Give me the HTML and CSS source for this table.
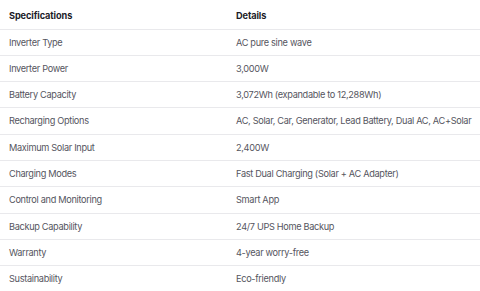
FILE: index.html
```html
<!DOCTYPE html>
<html lang="en">

<head>
    <meta charset="UTF-8">
    <meta name="viewport" content="width=device-width, initial-scale=1.0">
    <title>Specifications</title>
    <link rel="stylesheet" href="styles.css">
</head>

<body>
    <table class="spec-table">
        <thead>
            <tr>
                <th>Specifications</th>
                <th>Details</th>
            </tr>
        </thead>
        <tbody>
            <tr>
                <td>Inverter Type</td>
                <td>AC pure sine wave</td>
            </tr>
            <tr>
                <td>Inverter Power</td>
                <td>3,000W</td>
            </tr>
            <tr>
                <td>Battery Capacity</td>
                <td>3,072Wh (expandable to 12,288Wh)</td>
            </tr>
            <tr>
                <td>Recharging Options</td>
                <td>AC, Solar, Car, Generator, Lead Battery, Dual AC, AC+Solar</td>
            </tr>
            <tr>
                <td>Maximum Solar Input</td>
                <td>2,400W</td>
            </tr>
            <tr>
                <td>Charging Modes</td>
                <td>Fast Dual Charging (Solar + AC Adapter)</td>
            </tr>
            <tr>
                <td>Control and Monitoring</td>
                <td>Smart App</td>
            </tr>
            <tr>
                <td>Backup Capability</td>
                <td>24/7 UPS Home Backup</td>
            </tr>
            <tr>
                <td>Warranty</td>
                <td>4-year worry-free</td>
            </tr>
            <tr>
                <td>Sustainability</td>
                <td>Eco-friendly</td>
            </tr>
        </tbody>
    </table>
</body>

</html>
```

FILE: styles.css
```css
*,
*::before,
*::after {
    box-sizing: border-box;
}

body {
    margin: 0;
    padding: 0;
    background-color: #ffffff;
    font-family: 'Inter', 'Liberation Sans', sans-serif;
}

.spec-table {
    width: 480px;
    table-layout: fixed;
    border-collapse: collapse;
    font-size: 9.2px;
    letter-spacing: -0.32px;
}

.spec-table th,
.spec-table td {
    text-align: left;
    padding: 6px 9px;
    line-height: 13.3px;
    height: 26.3px;
    white-space: nowrap;
    border-bottom: 1px solid #e9e9ec;
}

.spec-table th {
    height: 29px;
    padding-top: 9px;
    color: #1c1c28;
    font-weight: 700;
    letter-spacing: -0.1px;
}

.spec-table td {
    color: #55555e;
    font-weight: 400;
}

.spec-table th:first-child,
.spec-table td:first-child {
    width: 227px;
}
```
